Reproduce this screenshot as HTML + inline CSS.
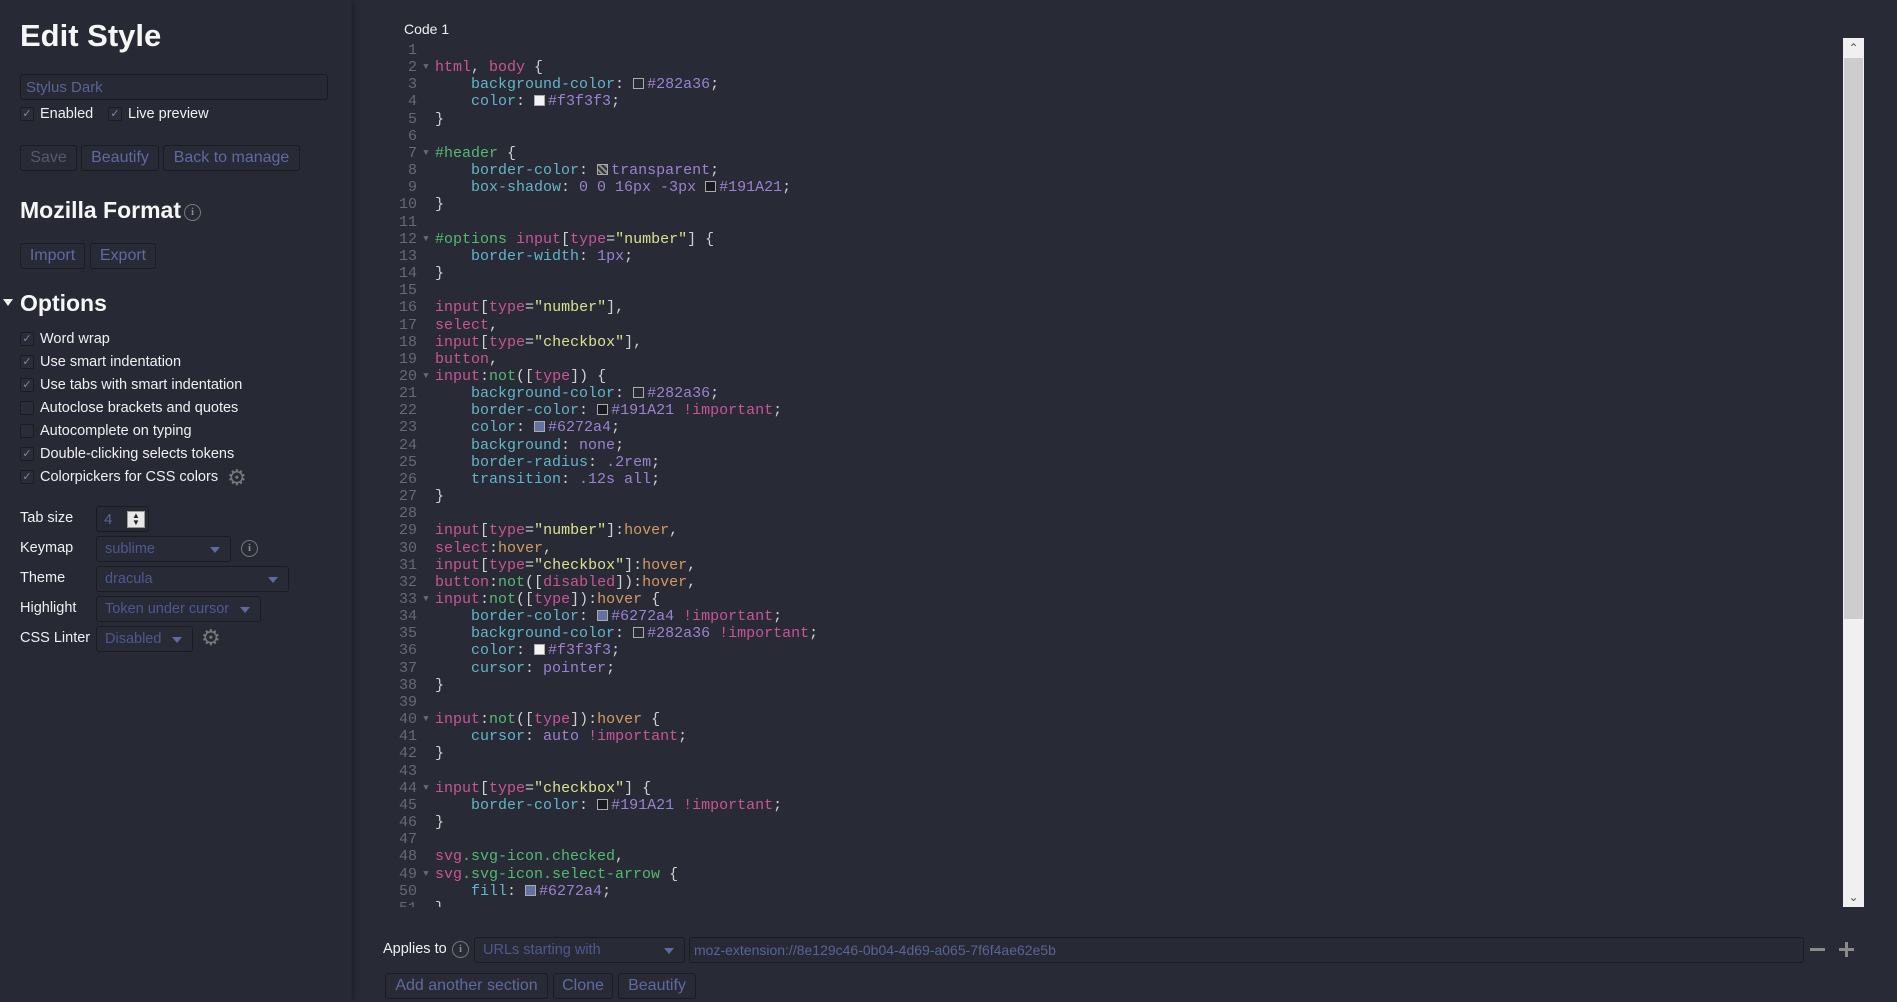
<!DOCTYPE html>
<html><head><meta charset="utf-8">
<style>
*{box-sizing:border-box;margin:0;padding:0}
html,body{width:1897px;height:1002px;overflow:hidden;background:#282a36;font-family:"Liberation Sans",sans-serif;color:#f3f3f3}
#left{position:absolute;left:0;top:0;width:352px;height:1002px;background:#272935;border-right:1px solid #23252f;box-shadow:2px 0 6px rgba(0,0,0,.25)}
.abs{position:absolute}
h1{position:absolute;left:20px;top:18px;font-size:31px;font-weight:bold;color:#f6f6f6}
h2{position:absolute;font-size:23px;font-weight:bold;color:#f6f6f6}
.inp{position:absolute;border:1px solid #1a1c24;border-radius:3px;background:#272935;color:#5a6394;font-size:15px;padding-left:5px;display:flex;align-items:center}
.btn{position:absolute;border:1px solid #1a1c24;border-radius:3px;background:#282a36;color:#5f6aa0;font-size:16px;display:flex;align-items:center;justify-content:center;height:26px}
.cb{position:absolute;left:20px;font-size:14.5px;color:#f0f0f0;display:flex;align-items:center;height:20px}
.cb i{display:inline-block;width:14px;height:14px;border:1px solid #1a1c24;border-radius:2px;margin-right:6px;background:#2a2c38;position:relative;font-style:normal;color:#7c86b0;font-size:11px;line-height:13px;text-align:center}
.lbl{position:absolute;left:20px;font-size:14.5px;color:#f0f0f0}
.sel{position:absolute;border:1px solid #1a1c24;border-radius:3px;background:#282a36;color:#4f5890;font-size:14.5px;height:26px;display:flex;align-items:center;padding-left:8px}
.sel::after{content:"";position:absolute;right:10px;top:10px;border-left:5px solid transparent;border-right:5px solid transparent;border-top:6px solid #5f6aa0}
.info{position:absolute;width:17px;height:17px;border:1.5px solid #777;border-radius:50%;color:#888;font-size:11px;font-weight:bold;font-family:"Liberation Serif",serif;text-align:center;line-height:14px}
.gear{position:absolute;color:#777;font-size:22px;line-height:22px}
#code{position:absolute;left:390px;top:42px;width:1453px;height:865px;overflow:hidden;font-family:"Liberation Mono",monospace;font-size:15px}
.ln{height:17.16px;line-height:17.16px;white-space:pre;position:relative}
.ln b{display:inline-block;width:27px;text-align:right;color:#62667280;color:#666a76;font-weight:normal}
.ln u{display:inline-block;width:18px;text-decoration:none;color:#666a76;font-size:9px;text-align:center;vertical-align:top}
.ln.act::before{content:"";position:absolute;left:45px;right:0;top:0;bottom:0;background:#2d2f3b;z-index:-1}
.t{color:#c95595}.p{color:#62b5c8}.v{color:#9c82cf}.s{color:#dce18f}.g{color:#52bb70}.o{color:#d59b5e}.w{color:#cfcfcf}
.sw{display:inline-block;width:11px;height:11px;border:1px solid #aaa;vertical-align:-1px;margin-right:3px}
#sb{position:absolute;left:1843px;top:38px;width:21px;height:869px;background:#f0f0f0}
#sb .th{position:absolute;left:1px;top:20px;width:19px;height:561px;background:#cdcdcd}
#sb .ar{position:absolute;left:0;width:21px;height:20px;color:#555;font-size:12px;text-align:center;line-height:20px}
</style></head><body>
<div id="left">
<h1>Edit Style</h1>
<div class="inp" style="left:20px;top:74px;width:308px;height:26px">Stylus Dark</div>
<div class="cb" style="top:104px"><i>✓</i>Enabled</div>
<div class="cb" style="top:104px;left:108px"><i>✓</i>Live preview</div>
<div class="btn" style="left:20px;top:145px;width:57px;color:#555a6e">Save</div>
<div class="btn" style="left:81px;top:145px;width:78px">Beautify</div>
<div class="btn" style="left:163px;top:145px;width:137px">Back to manage</div>
<h2 style="left:20px;top:197px">Mozilla Format</h2>
<div class="info" style="left:184px;top:204px">i</div>
<div class="btn" style="left:20px;top:243px;width:65px">Import</div>
<div class="btn" style="left:90px;top:243px;width:66px">Export</div>
<div class="abs" style="left:3px;top:299px;border-left:5px solid transparent;border-right:5px solid transparent;border-top:7px solid #eee"></div>
<h2 style="left:20px;top:290px">Options</h2>
<div class="cb" style="top:329px"><i>✓</i>Word wrap</div>
<div class="cb" style="top:352px"><i>✓</i>Use smart indentation</div>
<div class="cb" style="top:375px"><i>✓</i>Use tabs with smart indentation</div>
<div class="cb" style="top:398px"><i></i>Autoclose brackets and quotes</div>
<div class="cb" style="top:421px"><i></i>Autocomplete on typing</div>
<div class="cb" style="top:444px"><i>✓</i>Double-clicking selects tokens</div>
<div class="cb" style="top:467px"><i>✓</i>Colorpickers for CSS colors</div>
<div class="gear" style="left:227px;top:467px">⚙</div>
<div class="lbl" style="top:510px">Tab size</div>
<div class="inp" style="left:96px;top:506px;width:53px;height:26px;padding-left:7px">4<span style="position:absolute;left:30px;top:4px;width:18px;height:17px;background:#e8e8e8;border:1px solid #999;color:#222;font-size:8px;line-height:7px;text-align:center">▲<br>▼</span></div>
<div class="lbl" style="top:540px">Keymap</div>
<div class="sel" style="left:96px;top:536px;width:135px">sublime</div>
<div class="info" style="left:241px;top:540px">i</div>
<div class="lbl" style="top:570px">Theme</div>
<div class="sel" style="left:96px;top:566px;width:193px">dracula</div>
<div class="lbl" style="top:600px">Highlight</div>
<div class="sel" style="left:96px;top:596px;width:165px">Token under cursor</div>
<div class="lbl" style="top:630px">CSS Linter</div>
<div class="sel" style="left:96px;top:626px;width:97px">Disabled</div>
<div class="gear" style="left:201px;top:627px">⚙</div>
</div>

<div class="abs" style="left:404px;top:21px;font-size:14px;color:#f0f0f0">Code 1</div>
<div id="code">
<div class="ln"><b>1</b><u></u></div>
<div class="ln"><b>2</b><u>▼</u><span class="t">html</span><span class="w">, </span><span class="t">body</span><span class="w"> {</span></div>
<div class="ln"><b>3</b><u></u>    <span class="p">background-color</span><span class="w">: </span><span class="sw" style="background:#282a36"></span><span class="v">#282a36</span><span class="w">;</span></div>
<div class="ln"><b>4</b><u></u>    <span class="p">color</span><span class="w">: </span><span class="sw" style="background:#f3f3f3"></span><span class="v">#f3f3f3</span><span class="w">;</span></div>
<div class="ln"><b>5</b><u></u><span class="w">}</span></div>
<div class="ln"><b>6</b><u></u></div>
<div class="ln"><b>7</b><u>▼</u><span class="g">#header</span><span class="w"> {</span></div>
<div class="ln"><b>8</b><u></u>    <span class="p">border-color</span><span class="w">: </span><span class="sw" style="background:linear-gradient(45deg,#888 25%,#333 25%,#333 50%,#888 50%,#888 75%,#333 75%);background-size:6px 6px"></span><span class="v">transparent</span><span class="w">;</span></div>
<div class="ln"><b>9</b><u></u>    <span class="p">box-shadow</span><span class="w">: </span><span class="v">0 0 16px -3px </span><span class="sw" style="background:#191A21"></span><span class="v">#191A21</span><span class="w">;</span></div>
<div class="ln"><b>10</b><u></u><span class="w">}</span></div>
<div class="ln"><b>11</b><u></u></div>
<div class="ln"><b>12</b><u>▼</u><span class="g">#options</span> <span class="t">input</span><span class="w">[</span><span class="t">type</span><span class="w">=</span><span class="s">"number"</span><span class="w">] {</span></div>
<div class="ln"><b>13</b><u></u>    <span class="p">border-width</span><span class="w">: </span><span class="v">1px</span><span class="w">;</span></div>
<div class="ln"><b>14</b><u></u><span class="w">}</span></div>
<div class="ln"><b>15</b><u></u></div>
<div class="ln"><b>16</b><u></u><span class="t">input</span><span class="w">[</span><span class="t">type</span><span class="w">=</span><span class="s">"number"</span><span class="w">],</span></div>
<div class="ln"><b>17</b><u></u><span class="t">select</span><span class="w">,</span></div>
<div class="ln"><b>18</b><u></u><span class="t">input</span><span class="w">[</span><span class="t">type</span><span class="w">=</span><span class="s">"checkbox"</span><span class="w">],</span></div>
<div class="ln"><b>19</b><u></u><span class="t">button</span><span class="w">,</span></div>
<div class="ln"><b>20</b><u>▼</u><span class="t">input</span><span class="w">:</span><span class="g">not</span><span class="w">([</span><span class="t">type</span><span class="w">]) {</span></div>
<div class="ln"><b>21</b><u></u>    <span class="p">background-color</span><span class="w">: </span><span class="sw" style="background:#282a36"></span><span class="v">#282a36</span><span class="w">;</span></div>
<div class="ln"><b>22</b><u></u>    <span class="p">border-color</span><span class="w">: </span><span class="sw" style="background:#191A21"></span><span class="v">#191A21 </span><span class="t">!important</span><span class="w">;</span></div>
<div class="ln"><b>23</b><u></u>    <span class="p">color</span><span class="w">: </span><span class="sw" style="background:#6272a4"></span><span class="v">#6272a4</span><span class="w">;</span></div>
<div class="ln"><b>24</b><u></u>    <span class="p">background</span><span class="w">: </span><span class="v">none</span><span class="w">;</span></div>
<div class="ln"><b>25</b><u></u>    <span class="p">border-radius</span><span class="w">: </span><span class="v">.2rem</span><span class="w">;</span></div>
<div class="ln"><b>26</b><u></u>    <span class="p">transition</span><span class="w">: </span><span class="v">.12s all</span><span class="w">;</span></div>
<div class="ln"><b>27</b><u></u><span class="w">}</span></div>
<div class="ln"><b>28</b><u></u></div>
<div class="ln"><b>29</b><u></u><span class="t">input</span><span class="w">[</span><span class="t">type</span><span class="w">=</span><span class="s">"number"</span><span class="w">]:</span><span class="o">hover</span><span class="w">,</span></div>
<div class="ln act"><b>30</b><u></u><span class="t">select</span><span class="w">:</span><span class="o">hover</span><span class="w">,</span></div>
<div class="ln"><b>31</b><u></u><span class="t">input</span><span class="w">[</span><span class="t">type</span><span class="w">=</span><span class="s">"checkbox"</span><span class="w">]:</span><span class="o">hover</span><span class="w">,</span></div>
<div class="ln"><b>32</b><u></u><span class="t">button</span><span class="w">:</span><span class="g">not</span><span class="w">([</span><span class="t">disabled</span><span class="w">]):</span><span class="o">hover</span><span class="w">,</span></div>
<div class="ln"><b>33</b><u>▼</u><span class="t">input</span><span class="w">:</span><span class="g">not</span><span class="w">([</span><span class="t">type</span><span class="w">]):</span><span class="o">hover</span><span class="w"> {</span></div>
<div class="ln"><b>34</b><u></u>    <span class="p">border-color</span><span class="w">: </span><span class="sw" style="background:#6272a4"></span><span class="v">#6272a4 </span><span class="t">!important</span><span class="w">;</span></div>
<div class="ln"><b>35</b><u></u>    <span class="p">background-color</span><span class="w">: </span><span class="sw" style="background:#282a36"></span><span class="v">#282a36 </span><span class="t">!important</span><span class="w">;</span></div>
<div class="ln"><b>36</b><u></u>    <span class="p">color</span><span class="w">: </span><span class="sw" style="background:#f3f3f3"></span><span class="v">#f3f3f3</span><span class="w">;</span></div>
<div class="ln"><b>37</b><u></u>    <span class="p">cursor</span><span class="w">: </span><span class="v">pointer</span><span class="w">;</span></div>
<div class="ln"><b>38</b><u></u><span class="w">}</span></div>
<div class="ln"><b>39</b><u></u></div>
<div class="ln"><b>40</b><u>▼</u><span class="t">input</span><span class="w">:</span><span class="g">not</span><span class="w">([</span><span class="t">type</span><span class="w">]):</span><span class="o">hover</span><span class="w"> {</span></div>
<div class="ln"><b>41</b><u></u>    <span class="p">cursor</span><span class="w">: </span><span class="v">auto </span><span class="t">!important</span><span class="w">;</span></div>
<div class="ln"><b>42</b><u></u><span class="w">}</span></div>
<div class="ln"><b>43</b><u></u></div>
<div class="ln"><b>44</b><u>▼</u><span class="t">input</span><span class="w">[</span><span class="t">type</span><span class="w">=</span><span class="s">"checkbox"</span><span class="w">] {</span></div>
<div class="ln"><b>45</b><u></u>    <span class="p">border-color</span><span class="w">: </span><span class="sw" style="background:#191A21"></span><span class="v">#191A21 </span><span class="t">!important</span><span class="w">;</span></div>
<div class="ln"><b>46</b><u></u><span class="w">}</span></div>
<div class="ln"><b>47</b><u></u></div>
<div class="ln"><b>48</b><u></u><span class="t">svg</span><span class="g">.svg-icon.checked</span><span class="w">,</span></div>
<div class="ln"><b>49</b><u>▼</u><span class="t">svg</span><span class="g">.svg-icon.select-arrow</span><span class="w"> {</span></div>
<div class="ln"><b>50</b><u></u>    <span class="p">fill</span><span class="w">: </span><span class="sw" style="background:#6272a4"></span><span class="v">#6272a4</span><span class="w">;</span></div>
<div class="ln"><b>51</b><u></u><span class="w">}</span></div>
</div>
<div id="sb"><div class="ar" style="top:0">⌃</div><div class="th"></div><div class="ar" style="bottom:0">⌄</div></div>

<div class="abs" style="left:383px;top:941px;font-size:14.5px;color:#f0f0f0">Applies to</div>
<div class="info" style="left:452px;top:941px">i</div>
<div class="sel" style="left:474px;top:937px;width:211px">URLs starting with</div>
<div class="inp" style="left:689px;top:937px;width:1115px;height:26px;padding-left:4px;font-size:14px;color:#5a6394">moz-extension://8e129c46-0b04-4d69-a065-7f6f4ae62e5b</div>
<div class="abs" style="left:1810px;top:948px;width:15px;height:3px;background:#8a8a8a"></div>
<div class="abs" style="left:1839px;top:948px;width:15px;height:3px;background:#8a8a8a"></div>
<div class="abs" style="left:1845px;top:942px;width:3px;height:15px;background:#8a8a8a"></div>
<div class="btn" style="left:385px;top:973px;width:163px">Add another section</div>
<div class="btn" style="left:553px;top:973px;width:60px">Clone</div>
<div class="btn" style="left:618px;top:973px;width:78px">Beautify</div>
</body></html>
